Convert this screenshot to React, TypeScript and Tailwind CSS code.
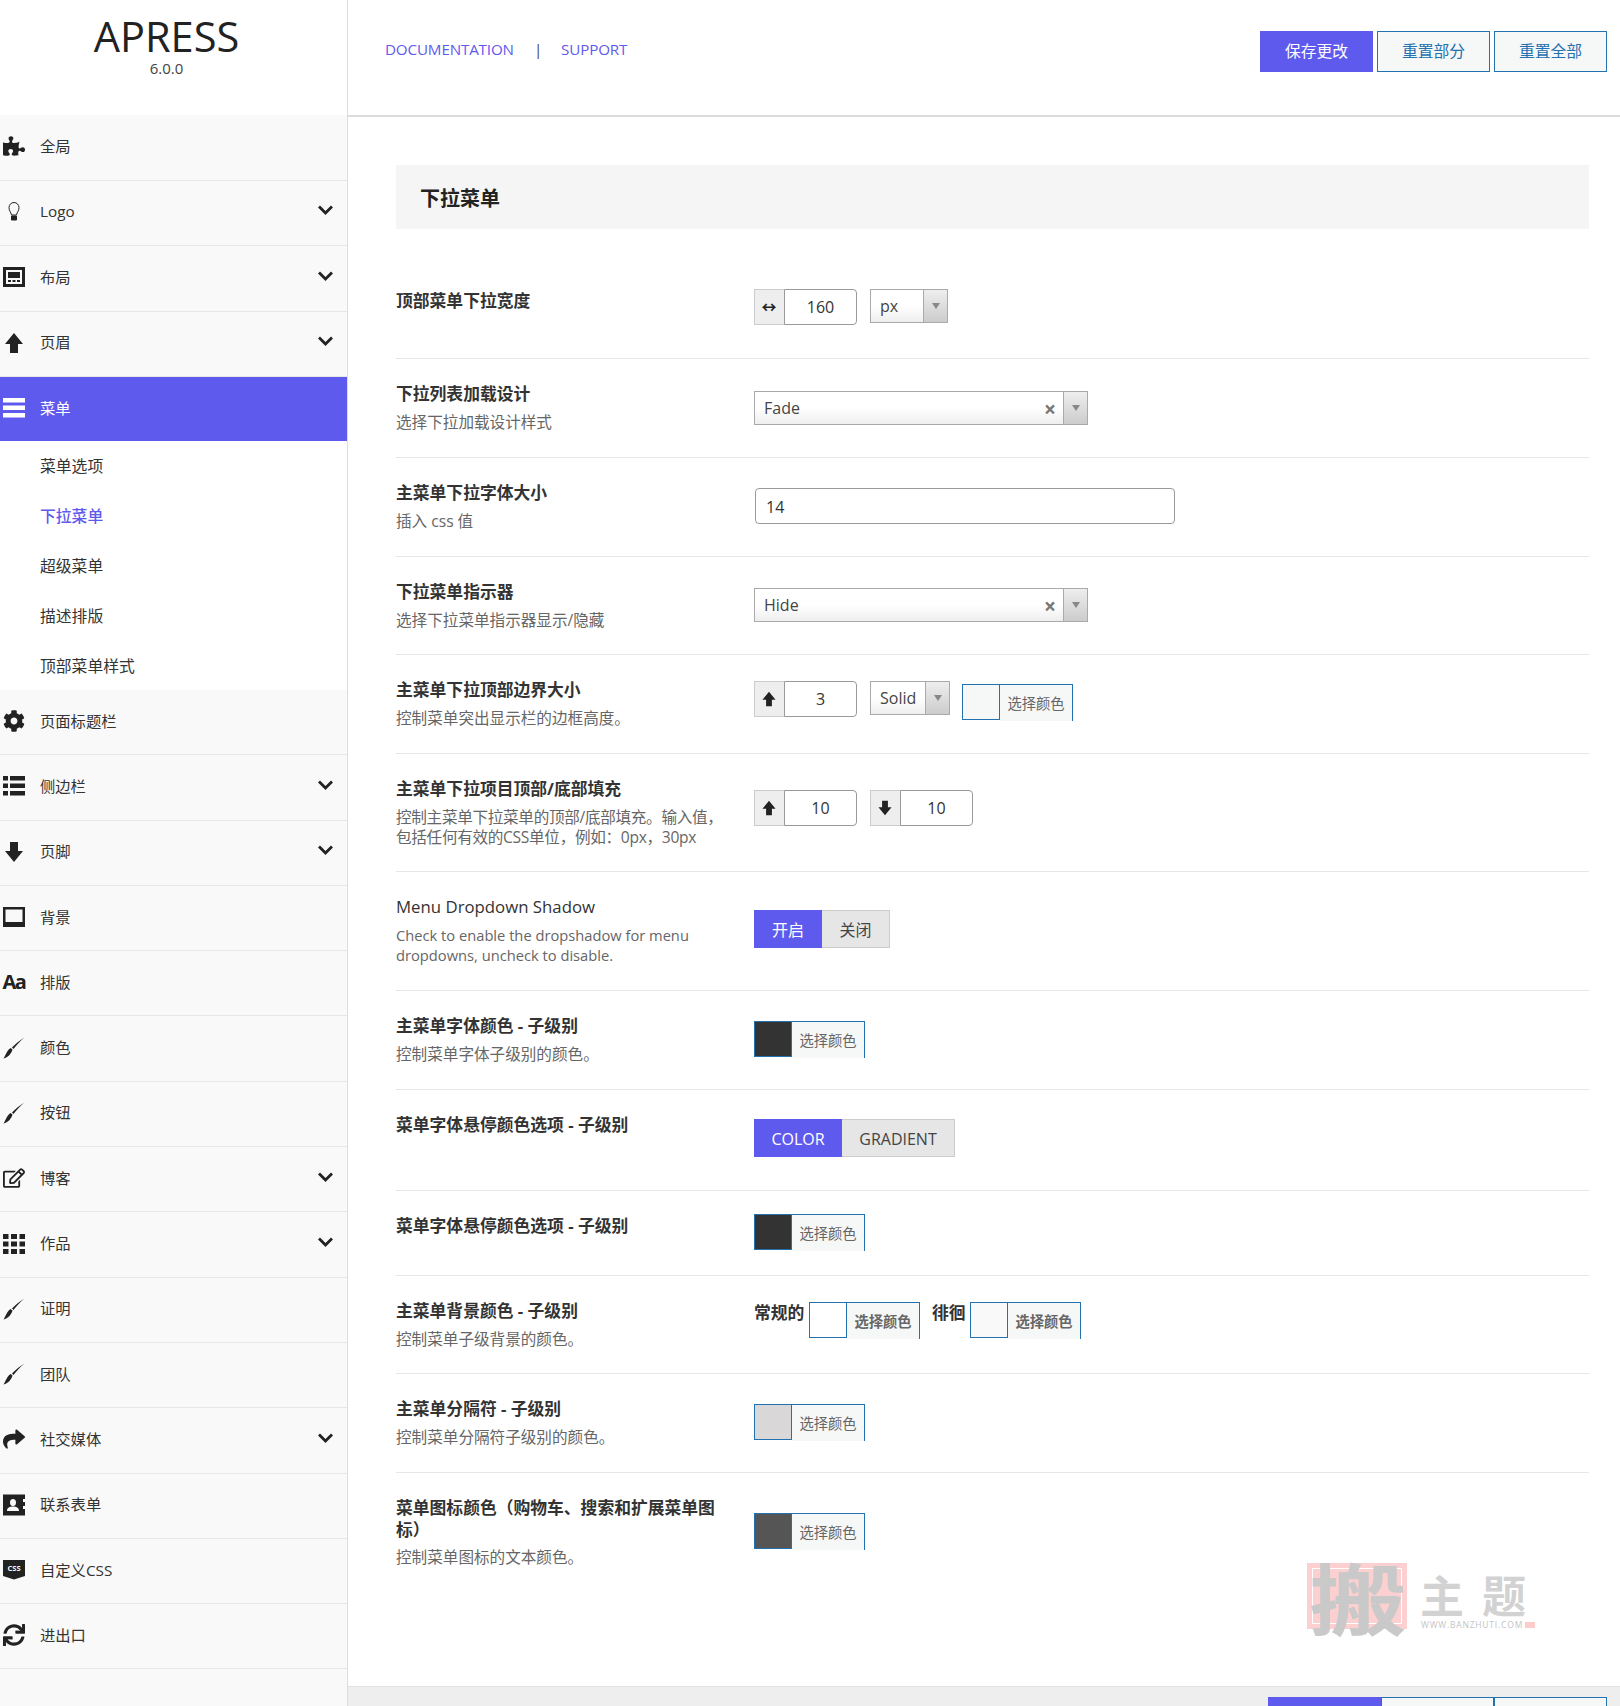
import { ReactNode } from "react";
import { FaCog, FaPuzzlePiece, FaRegEdit, FaShare, FaSync } from "react-icons/fa";

const Up = ({ size = 22 }: { size?: number }) => (
  <svg width={size} height={size} viewBox="0 0 22 22" fill="currentColor">
    <path d="M11 1 20 12H15V21H7V12H2Z" />
  </svg>
);

const Down = ({ size = 22 }: { size?: number }) => (
  <svg width={size} height={size} viewBox="0 0 22 22" fill="currentColor">
    <path d="M11 21 2 10H7V1H15V10H20Z" />
  </svg>
);

const Brush = () => (
  <svg width="22" height="22" viewBox="0 0 22 22" fill="currentColor">
    <path d="M21.500 0.500C17.500 3.500 13.500 8 10.500 12L9 10.500C12 7.500 17 3 21.500 0.500ZM9.500 12.500C8.500 16.500 5 20.500 0.500 21.500C2.500 19 3 14.500 7.500 11Z" />
  </svg>
);

const icons: Record<string, ReactNode> = {
  puzzle: <FaPuzzlePiece size={22} />,
  bulb: (
    <svg width="22" height="22" viewBox="0 0 22 22" fill="none" stroke="currentColor" strokeWidth="1">
      <path d="M8.500 14C8 11 6 10 6 6.500A5 5 0 0 1 16 6.500C16 10 14 11 13.500 14Z" />
      <path d="M8.500 15H13.500V19H8.500Z" fill="currentColor" />
    </svg>
  ),
  website: (
    <svg width="22" height="22" viewBox="0 0 22 22" fill="currentColor">
      <path fillRule="evenodd" d="M0 1H22V21H0ZM3 4V18H19V4Z" />
      <path d="M5 6H17V12H5ZM5 14H8V16H5ZM9.500 14H12.500V16H9.500ZM14 14H17V16H14Z" />
    </svg>
  ),
  up: <Up />,
  lines: (
    <svg width="22" height="22" viewBox="0 0 22 22" fill="currentColor">
      <path d="M0 1H22V5.500H0ZM0 8.500H22V13H0ZM0 16H22V20.500H0Z" />
    </svg>
  ),
  cog: <FaCog size={22} />,
  list: (
    <svg width="22" height="22" viewBox="0 0 22 22" fill="currentColor">
      <path d="M0 1H5V5.500H0ZM7 1H22V5.500H7ZM0 8.500H5V13H0ZM7 8.500H22V13H7ZM0 16H5V20.500H0ZM7 16H22V20.500H7Z" />
    </svg>
  ),
  down: <Down />,
  picture: (
    <svg width="22" height="22" viewBox="0 0 22 22" fill="currentColor">
      <path fillRule="evenodd" d="M0 1H22V21H0ZM2.500 3.500V16H19.500V3.500Z" />
    </svg>
  ),
  font: <span className="text-[20px] leading-[22px] font-bold tracking-[-1.500px]">Aa</span>,
  brush: <Brush />,
  edit: <FaRegEdit size={22} />,
  grid: (
    <svg width="22" height="22" viewBox="0 0 22 22" fill="currentColor">
      <path d="M0 1H5.500V6H0ZM8 1H14V6H8ZM16.500 1H22V6H16.500ZM0 8.500H5.500V13.500H0ZM8 8.500H14V13.500H8ZM16.500 8.500H22V13.500H16.500ZM0 16H5.500V21H0ZM8 16H14V21H8ZM16.500 16H22V21H16.500Z" />
    </svg>
  ),
  share: <FaShare size={22} />,
  address: (
    <svg width="22" height="22" viewBox="0 0 22 22" fill="currentColor">
      <path fillRule="evenodd" d="M0 0.500H22V5H20V8H22V12H20V15H22V21.500H0ZM10 5A3 3.500 0 0 0 10 12A3 3.500 0 0 0 10 5ZM4 17H16C16 13.500 13 12.500 10 12.500C7 12.500 4 13.500 4 17Z" />
    </svg>
  ),
  css: (
    <svg width="22" height="22" viewBox="0 0 22 22" fill="currentColor">
      <path d="M0 1H22V17L11 20.500 0 17Z" />
      <text x="11" y="11.500" textAnchor="middle" fontSize="7.500" fontWeight="700" fill="#f9f9f9">CSS</text>
    </svg>
  ),
  sync: <FaSync size={22} />,
};

const topItems = [
  { label: "全局", icon: "puzzle" },
  { label: "Logo", icon: "bulb", more: true },
  { label: "布局", icon: "website", more: true },
  { label: "页眉", icon: "up", more: true },
];

const bottomItems = [
  { label: "页面标题栏", icon: "cog" },
  { label: "侧边栏", icon: "list", more: true },
  { label: "页脚", icon: "down", more: true },
  { label: "背景", icon: "picture" },
  { label: "排版", icon: "font" },
  { label: "颜色", icon: "brush" },
  { label: "按钮", icon: "brush" },
  { label: "博客", icon: "edit", more: true },
  { label: "作品", icon: "grid", more: true },
  { label: "证明", icon: "brush" },
  { label: "团队", icon: "brush" },
  { label: "社交媒体", icon: "share", more: true },
  { label: "联系表单", icon: "address" },
  { label: "自定义CSS", icon: "css" },
  { label: "进出口", icon: "sync" },
];

const subItems = ["菜单选项", "下拉菜单", "超级菜单", "描述排版", "顶部菜单样式"];

function Chevron() {
  return (
    <svg width="15" height="10" viewBox="0 0 15 10" fill="none" stroke="#222" strokeWidth="2.800" className="ml-auto mr-[14px] mb-[3px]">
      <path d="M1 1.500 7.500 8 14 1.500" />
    </svg>
  );
}

function NavItem({ label, icon, more, h }: { label: string; icon: string; more?: boolean; h: string }) {
  return (
    <div className={`flex items-center pl-[3px] pb-[2px] border-b border-[#e6e6e6] text-[#333] text-[15.300px] ${h}`}>
      <span className="flex w-[22px] h-[22px] items-center justify-center text-[#222]">{icons[icon]}</span>
      <span className="ml-[15px]">{label}</span>
      {more && <Chevron />}
    </div>
  );
}

function Addon({ icon, w = "w-[103px]", value }: { icon: ReactNode; w?: string; value: string }) {
  return (
    <div className={`flex h-[36px] text-[#333] ${w}`}>
      <span className="flex w-[30px] pr-[1px] items-center justify-center bg-[#eee] border border-r-0 border-[#ccc] text-[#222]">{icon}</span>
      <span className="flex flex-1 items-center justify-center bg-white border border-[#999] rounded-r-[4px] text-[16px] pb-[1px]">{value}</span>
    </div>
  );
}

function Select({ value, w, clear, arrow = "w-[24px]" }: { value: string; w: string; clear?: boolean; arrow?: string }) {
  return (
    <div className={`flex h-[34px] border border-[#aaa] bg-gradient-to-b from-white from-50% to-[#eee] text-[#444] text-[16px] ${w}`}>
      <span className="pl-[9px] leading-[32px]">{value}</span>
      {clear && <span className="ml-auto mr-[7px] mt-[1px] text-[#777] text-[21px] leading-[32px] font-bold">×</span>}
      <span className={`flex items-center justify-center border-l border-[#aaa] bg-gradient-to-b from-[#eee] to-[#ccc] ${arrow} ${clear ? "" : "ml-auto"}`}>
        <span className="w-0 h-0 border-x-[4px] border-x-transparent border-t-[6px] border-t-[#888]" />
      </span>
    </div>
  );
}

function ColorPick({ color }: { color: string }) {
  return (
    <div className="flex w-[111px]">
      <span className={`w-[38px] h-[36px] border border-[#2271b1] ${color}`} />
      <span className="flex-1 h-[37px] bg-[#f6f7f7] border-t border-r border-[#2271b1] text-[#666] text-[14.300px] text-center leading-[37px]">选择颜色</span>
    </div>
  );
}

function Toggle({ on, off, onW, offW }: { on: string; off: string; onW: string; offW: string }) {
  return (
    <div className="flex h-[38px] text-[16px]">
      <span className={`flex items-center justify-center pt-[1px] bg-[#5f5aee] text-white ${onW}`}>{on}</span>
      <span className={`flex items-center justify-center pt-[1px] bg-[#e6e6e6] border border-l-0 border-[#ccc] text-[#444] ${offW}`}>{off}</span>
    </div>
  );
}

const rows = [
  {
    h: "h-[94px]", top: "mt-[24px]", pad: "pt-[25px]", label: "顶部菜单下拉宽度",
    control: (
      <div className="flex gap-[13px]">
        <Addon value="160" icon={<span className="text-[15px] font-bold leading-none">↔</span>} />
        <Select value="px" w="w-[78px]" />
      </div>
    ),
  },
  { h: "h-[99px]", top: "mt-[32px]", label: "下拉列表加载设计", desc: ["选择下拉加载设计样式"], control: <Select value="Fade" w="w-[334px]" clear /> },
  {
    h: "h-[99px]", top: "mt-[30px]", label: "主菜单下拉字体大小", desc: ["插入 css 值"],
    control: <div className="w-[420px] h-[36px] ml-[1px] border border-[#999] rounded-[4px] pl-[10px] leading-[36px] text-[16px] text-[#333]">14</div>,
  },
  { h: "h-[98px]", top: "mt-[31px]", label: "下拉菜单指示器", desc: ["选择下拉菜单指示器显示/隐藏"], control: <Select value="Hide" w="w-[334px]" clear /> },
  {
    h: "h-[99px]", top: "mt-[26px]", label: "主菜单下拉顶部边界大小", desc: ["控制菜单突出显示栏的边框高度。"],
    control: (
      <div className="flex items-start">
        <Addon value="3" icon={<Up size={16} />} />
        <div className="ml-[13px]"><Select value="Solid" w="w-[80px]" /></div>
        <div className="ml-[12px] mt-[3px]"><ColorPick color="bg-[#f6f7f7]" /></div>
      </div>
    ),
  },
  {
    h: "h-[118px]", top: "mt-[36px]", label: "主菜单下拉项目顶部/底部填充", tight: true, desc: ["控制主菜单下拉菜单的顶部/底部填充。输入值，", "包括任何有效的CSS单位，例如：0px，30px"],
    control: (
      <div className="flex gap-[13px]">
        <Addon value="10" icon={<Up size={16} />} />
        <Addon value="10" icon={<Down size={16} />} />
      </div>
    ),
  },
  {
    h: "h-[119px]", top: "mt-[38px]", label: "Menu Dropdown Shadow", plain: true, desc: ["Check to enable the dropshadow for menu", "dropdowns, uncheck to disable."],
    control: <Toggle on="开启" off="关闭" onW="w-[68px]" offW="w-[68px]" />,
  },
  { h: "h-[99px]", top: "mt-[30px]", label: "主菜单字体颜色 - 子级别", desc: ["控制菜单字体子级别的颜色。"], control: <ColorPick color="bg-[#333]" /> },
  { h: "h-[101px]", top: "mt-[29px]", label: "菜单字体悬停颜色选项 - 子级别", control: <Toggle on="COLOR" off="GRADIENT" onW="w-[88px]" offW="w-[113px]" /> },
  { h: "h-[85px]", top: "mt-[23px]", label: "菜单字体悬停颜色选项 - 子级别", control: <ColorPick color="bg-[#333]" /> },
  {
    h: "h-[98px]", top: "mt-[26px]", label: "主菜单背景颜色 - 子级别", desc: ["控制菜单子级背景的颜色。"],
    control: (
      <div className="flex items-start text-[16.800px] font-bold text-[#333]">
        <span className="w-[55px] leading-[22px]">常规的</span>
        <ColorPick color="bg-white" />
        <span className="ml-[12px] w-[38px] leading-[22px]">徘徊</span>
        <ColorPick color="bg-[#f9f9f9]" />
      </div>
    ),
  },
  { h: "h-[99px]", top: "mt-[30px]", label: "主菜单分隔符 - 子级别", desc: ["控制菜单分隔符子级别的颜色。"], control: <ColorPick color="bg-[#d9d7d7]" /> },
  {
    h: "h-[130px] border-b-0", top: "mt-[40px]", label: "菜单图标颜色（购物车、搜索和扩展菜单图标）", desc: ["控制菜单图标的文本颜色。"],
    control: <ColorPick color="bg-[#555]" />,
  },
];

function TopButtons({ widths, gap }: { widths: string[]; gap: string }) {
  const labels = ["保存更改", "重置部分", "重置全部"];
  return (
    <div className={`flex ml-auto h-[41px] text-[15.800px] ${gap}`}>
      {labels.map((l, i) => (
        <span
          key={l}
          className={`flex items-center justify-center ${widths[i]} ${i === 0 ? "bg-[#5f5aee] text-white" : "bg-[#f6f7f7] border border-[#2271b1] text-[#2271b1]"}`}
        >
          {l}
        </span>
      ))}
    </div>
  );
}

export default function App() {
  return (
    <div className="relative flex w-[1620px] h-[1706px] overflow-hidden bg-white font-['Open_Sans','Noto_Sans_CJK_SC',sans-serif]">
      {/* Sidebar */}
      <aside className="w-[348px] shrink-0 border-r border-[#ddd] bg-[#f9f9f9]">
        <div className="h-[115px] pr-[14px] bg-white text-center text-[#222]">
          <div className="pt-[13px] text-[41.500px] leading-[46px]">APRESS</div>
          <div className="text-[15px] leading-[18px] text-[#444]">6.0.0</div>
        </div>
        {topItems.map((it) => (
          <NavItem key={it.label} {...it} h="h-[65.500px]" />
        ))}
        <div className="flex h-[64px] items-center pl-[3px] pb-[2px] bg-[#5f5aee] text-white text-[15.300px]">
          <span className="flex w-[22px] h-[22px] items-center justify-center">{icons.lines}</span>
          <span className="ml-[15px]">菜单</span>
        </div>
        <div className="h-[249px] bg-white">
          {subItems.map((s, i) => (
            <div key={s} className={`h-[50px] pl-[40px] text-[15.800px] leading-[50px] ${i === 1 ? "text-[#5f5aee] font-medium" : "text-[#333]"}`}>
              {s}
            </div>
          ))}
        </div>
        {bottomItems.map((it) => (
          <NavItem key={it.label} {...it} h="h-[65.300px]" />
        ))}
      </aside>

      {/* Main */}
      <main className="flex flex-col flex-1 min-w-0">
        <header className="flex h-[117px] shrink-0 items-start border-b-2 border-[#ddd] pl-[37px] pr-[13px]">
          <div className="flex items-center h-[98px] text-[15.200px] text-[#5f5aee] tracking-[-0.150px]">
            <span>DOCUMENTATION</span>
            <span className="ml-[20px] text-[#444]">|</span>
            <span className="ml-[19px]">SUPPORT</span>
          </div>
          <div className="flex flex-1 pt-[31px]">
            <TopButtons widths={["w-[113px]", "w-[113px]", "w-[113px]"]} gap="gap-[4px]" />
          </div>
        </header>

        <div className="flex-1 pt-[48px] px-[48px] pr-[31px]">
          <div className="flex h-[64px] items-center bg-[#f5f5f5] pl-[24px] pt-[3px] text-[20px] font-bold text-[#222]">下拉菜单</div>
          <div className="mt-[36px]">
            {rows.map((r, i) => (
              <div key={i} className={`flex border-b border-[#e6e6e6] ${r.h}`}>
                <div className={`w-[328px] mr-[30px] ${r.pad ?? "pt-[24px]"}`}>
                  <div className={`text-[16.800px] leading-[21.500px] text-[#333] ${r.plain ? "font-medium" : "font-bold"}`}>{r.label}</div>
                  {r.desc && (
                    <div className={`mt-[7px] leading-[20px] text-[#666] whitespace-nowrap ${r.plain ? "text-[14.700px]" : "text-[15.600px]"} ${r.tight ? "tracking-[-0.300px]" : ""}`}>
                      {r.desc.map((d) => (
                        <div key={d}>{d}</div>
                      ))}
                    </div>
                  )}
                </div>
                <div className={r.top}>{r.control}</div>
              </div>
            ))}
          </div>
        </div>

        <footer className="flex h-[20px] shrink-0 border-t border-[#e2e2e2] bg-[#eee] pt-[10px] pr-[13px]">
          <TopButtons widths={["w-[113px]", "w-[113px]", "w-[113px]"]} gap="gap-0" />
        </footer>
      </main>

      {/* Watermark */}
      <div className="absolute left-[1307px] top-[1563px] w-[230px] h-[70px]">
        <div className="absolute left-0 top-0 w-[100px] h-[66px] border-[3px] border-[#fcd0d0] bg-[#fcd0d0] outline outline-1 outline-white -outline-offset-[6px]" />
        <div className="absolute left-[12px] top-[-9px] scale-x-125 text-[78px] leading-[84px] font-bold text-[#c9c9c9] font-['Noto_Sans_CJK_SC',sans-serif]">搬</div>
        <div className="absolute left-[113px] top-[10px] flex gap-[18px] text-[44px] leading-[42px] font-bold text-[#d2d2d2] font-['Noto_Sans_CJK_SC',sans-serif]">
          <span>主</span>
          <span>题</span>
        </div>
        <div className="absolute left-[114px] top-[56px] text-[8.500px] leading-[12px] text-[#c4c4c4] tracking-[0.800px]">WWW.BANZHUTI.COM</div>
        <div className="absolute left-[218px] top-[59px] w-[10px] h-[6px] bg-[#fcc]" />
      </div>
    </div>
  );
}
